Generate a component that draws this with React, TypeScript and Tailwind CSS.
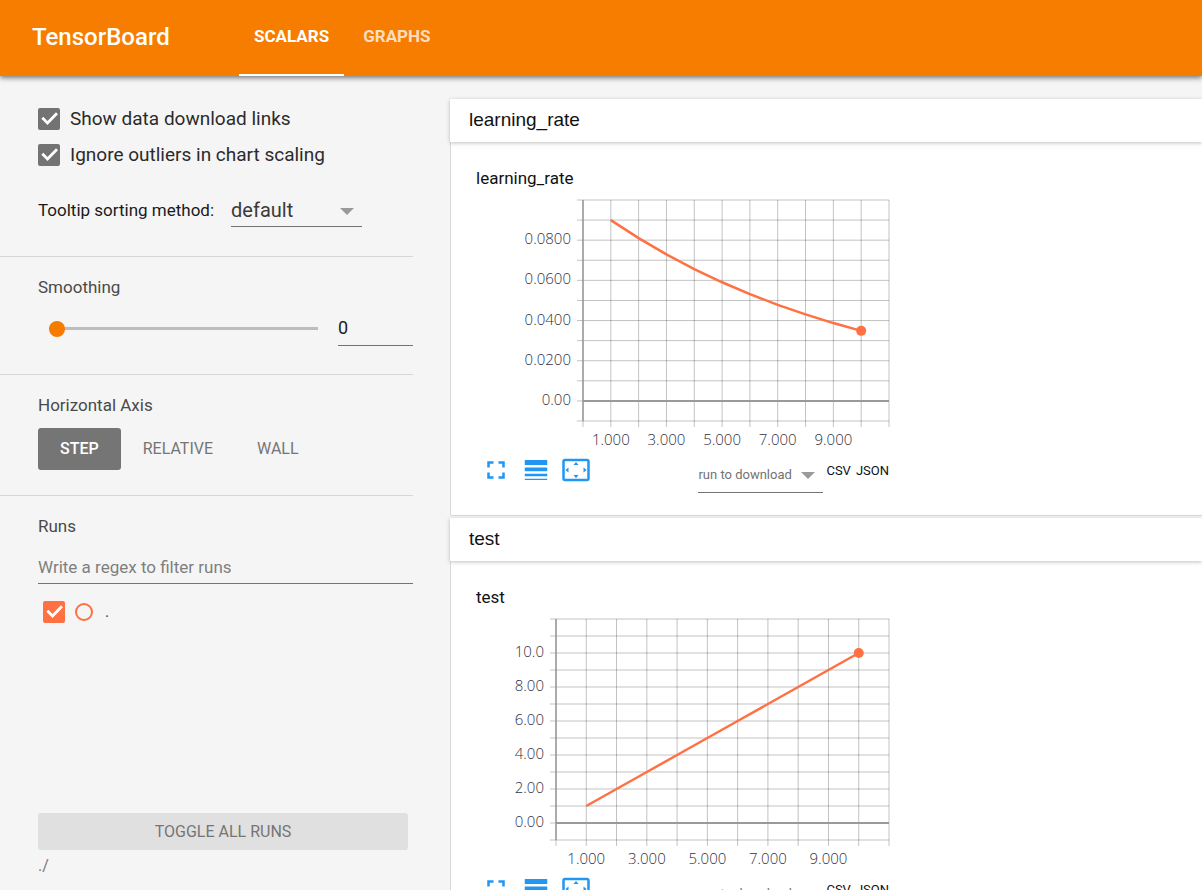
import React, { useState } from 'react';

interface Point {
  step: number;
  value: number;
}

interface ScalarChart {
  tag: string;
  points: Point[];
  plotLeft: number;
  yMin: number;
  yMax: number;
  yStep: number;
  yLabels: { value: number; text: string }[];
}

const STEPS = [1, 2, 3, 4, 5, 6, 7, 8, 9, 10];

const CHARTS: ScalarChart[] = [
  {
    tag: 'learning_rate',
    points: STEPS.map((step) => ({ step, value: 0.09 * Math.pow(0.9, step - 1) })),
    plotLeft: 107,
    yMin: -0.01,
    yMax: 0.1,
    yStep: 0.01,
    yLabels: [
      { value: 0.08, text: '0.0800' },
      { value: 0.06, text: '0.0600' },
      { value: 0.04, text: '0.0400' },
      { value: 0.02, text: '0.0200' },
      { value: 0, text: '0.00' },
    ],
  },
  {
    tag: 'test',
    points: STEPS.map((step) => ({ step, value: step })),
    plotLeft: 80,
    yMin: -1,
    yMax: 12,
    yStep: 1,
    yLabels: [
      { value: 10, text: '10.0' },
      { value: 8, text: '8.00' },
      { value: 6, text: '6.00' },
      { value: 4, text: '4.00' },
      { value: 2, text: '2.00' },
      { value: 0, text: '0.00' },
    ],
  },
];

const FULLSCREEN = 'M7 14H5v5h5v-2H7v-3zm-2-4h2V7h3V5H5v5zm12 7h-3v2h5v-5h-2v3zM14 5v2h3v3h2V5h-5z';
const LINE_WEIGHT = 'M3 17h18v-2H3v2zm0 3h18v-1H3v1zm0-7h18v-3H3v3zm0-9v4h18V4H3z';
const OVERSCAN =
  'M12.01 5.5L10 8h4l-1.99-2.5zM18 10v4l2.5-1.99L18 10zM6 10l-2.5 2.01L6 14v-4zm8 6h-4l2.01 2.5L14 16zm7-13H3c-1.1 0-2 .9-2 2v14c0 1.1.9 2 2 2h18c1.1 0 2-.9 2-2V5c0-1.1-.9-2-2-2zm0 16.01H3V4.99h18v14.02z';

const Checkbox: React.FC<{ id: string; label?: string; color: string }> = ({ id, label, color }) => {
  const [checked, setChecked] = useState(true);
  return (
    <span className="relative block h-[22px] w-[22px] shrink-0">
      <input
        id={id}
        type="checkbox"
        aria-label={label}
        checked={checked}
        onChange={() => setChecked(!checked)}
        className={`block h-full w-full appearance-none rounded-xs ${color}`}
      />
      {checked && (
        <svg viewBox="0 0 22 22" className="pointer-events-none absolute inset-0" fill="none" stroke="#fff" strokeWidth="2.8">
          <path d="M4.3 9.8l5.2 5.2L19 5.3" />
        </svg>
      )}
    </span>
  );
};

const Caret: React.FC<{ className: string }> = ({ className }) => (
  <svg viewBox="0 0 14 7" className={`pointer-events-none absolute h-[7px] w-[14px] fill-[#9a9a9a] ${className}`}>
    <path d="M0 0h14L7 7z" />
  </svg>
);

const LineChart: React.FC<{ chart: ScalarChart }> = ({ chart }) => {
  const right = 413;
  const top = 5;
  const bottom = 226;
  const x = (step: number) => chart.plotLeft + ((right - chart.plotLeft) * step) / 11;
  const y = (value: number) => bottom - ((bottom - top) * (value - chart.yMin)) / (chart.yMax - chart.yMin);
  const rowCount = Math.round((chart.yMax - chart.yMin) / chart.yStep);
  const rows = Array.from({ length: rowCount + 1 }, (_, i) => chart.yMin + i * chart.yStep);
  const cols = Array.from({ length: 12 }, (_, i) => i);
  const last = chart.points[chart.points.length - 1];

  return (
    <svg width="413" height="255" className="block overflow-visible" role="img" aria-label={chart.tag}>
      <g stroke="#000" strokeOpacity="0.24">
        {rows.map((v) => (
          <line key={v} x1={chart.plotLeft - 6} x2={right} y1={y(v)} y2={y(v)} />
        ))}
        {cols.map((s) => (
          <line key={s} x1={x(s)} x2={x(s)} y1={top} y2={bottom + 6} />
        ))}
      </g>
      <line x1={chart.plotLeft} x2={right} y1={y(0)} y2={y(0)} stroke="#999" strokeWidth="2" />
      <line x1={chart.plotLeft} x2={chart.plotLeft} y1={top} y2={bottom} stroke="#999" strokeWidth="1.5" />
      <polyline
        points={chart.points.map((p) => `${x(p.step)},${y(p.value)}`).join(' ')}
        fill="none"
        stroke="#ff7043"
        strokeWidth="2.5"
      />
      <circle cx={x(last.step)} cy={y(last.value)} r="5" fill="#ff7043" />
      <g className="fill-[#32313f] font-['Open_Sans',sans-serif] text-[15px] font-light">
        {chart.yLabels.map((l) => (
          <text key={l.text} x={chart.plotLeft - 12} y={y(l.value) + 4} textAnchor="end">
            {l.text}
          </text>
        ))}
        {[1, 3, 5, 7, 9].map((s) => (
          <text key={s} x={x(s)} y={bottom + 24} textAnchor="middle">
            {`${s}.000`}
          </text>
        ))}
      </g>
    </svg>
  );
};

const IconButton: React.FC<{ label: string; path: string; onClick?: () => void }> = ({ label, path, onClick }) => (
  <button aria-label={label} onClick={onClick} className="flex h-10 w-10 items-center justify-center">
    <svg viewBox="0 0 24 24" className="h-[30px] w-[30px] fill-[#2196f3]">
      <path d={path} />
    </svg>
  </button>
);

const ChartPane: React.FC<{ chart: ScalarChart }> = ({ chart }) => (
  <section className="mb-0.5">
    <h2 className="relative flex h-[43px] items-center bg-white pl-[19px] font-['Liberation_Sans',Arial,sans-serif] text-[19px] shadow-[0_1px_4px_rgba(0,0,0,0.25)]">
      {chart.tag}
    </h2>
    <div className="h-[374px] rounded-bl-xs border-b border-l border-[#d9d9d9] bg-white pt-6 pl-[25px]">
      <div className="w-[413px]">
        <h3 className="mb-[5px] text-[17px] leading-6">{chart.tag}</h3>
        <LineChart chart={chart} />
        <div className="flex items-start">
          <IconButton label="Toggle fullscreen" path={FULLSCREEN} />
          <IconButton label="Toggle y-axis log scale" path={LINE_WEIGHT} />
          <IconButton label="Fit domain to data" path={OVERSCAN} />
          <div className="relative mt-2 ml-auto">
            <select
              aria-label="run to download"
              className="block h-[35px] w-[125px] appearance-none border-b border-[#737373] text-[13px] text-[#737373]"
            >
              <option>run to download</option>
            </select>
            <Caret className="top-[14px] right-2" />
          </div>
          <div className="mt-[11px] flex gap-[5px] pl-[3px] text-[13px] leading-5">
            <a href="#csv">CSV</a>
            <a href="#json">JSON</a>
          </div>
        </div>
      </div>
    </div>
  </section>
);

const Sidebar: React.FC = () => {
  const [axis, setAxis] = useState('STEP');
  const [smoothing, setSmoothing] = useState(0);

  return (
    <aside className="flex w-[413px] shrink-0 flex-col text-[17px] text-[#4a4a4a]">
      <div className="border-b border-[#d6d6d6] pt-8 pb-[29px] pl-[38px] text-[#2b2b2b]">
        <div className="flex h-[22px] items-center gap-2.5">
          <Checkbox id="download-links" color="bg-[#737373]" />
          <label htmlFor="download-links" className="text-[19px]">Show data download links</label>
        </div>
        <div className="mt-3.5 flex h-[22px] items-center gap-2.5">
          <Checkbox id="ignore-outliers" color="bg-[#737373]" />
          <label htmlFor="ignore-outliers" className="text-[19px]">Ignore outliers in chart scaling</label>
        </div>
        <div className="mt-7 flex items-center gap-[17px]">
          <label htmlFor="tooltip-sort" className="text-[#1a1a1a]">Tooltip sorting method:</label>
          <div className="relative">
            <select id="tooltip-sort" className="block h-[33px] w-[131px] appearance-none border-b border-[#737373] text-[20px] text-[#3a3a3a]">
              <option>default</option>
              <option>ascending</option>
              <option>descending</option>
              <option>nearest</option>
            </select>
            <Caret className="top-[14px] right-2" />
          </div>
        </div>
      </div>

      <div className="border-b border-[#d6d6d6] pt-[18px] pb-7 pl-[38px]">
        <label htmlFor="smoothing" className="block leading-6">Smoothing</label>
        <div className="mt-3 flex items-center">
          <input
            id="smoothing"
            type="range"
            min="0"
            max="1"
            step="0.001"
            value={smoothing}
            onChange={(e) => setSmoothing(Number(e.target.value))}
            className="mr-5 ml-[11px] h-4 min-w-0 flex-1 appearance-none bg-transparent [&::-webkit-slider-runnable-track]:h-[3px] [&::-webkit-slider-runnable-track]:bg-[#bdbdbd] [&::-webkit-slider-thumb]:-mt-[6px] [&::-webkit-slider-thumb]:h-4 [&::-webkit-slider-thumb]:w-4 [&::-webkit-slider-thumb]:appearance-none [&::-webkit-slider-thumb]:rounded-full [&::-webkit-slider-thumb]:bg-[#f57c00]"
          />
          <input
            aria-label="Smoothing value"
            type="text"
            value={smoothing}
            onChange={(e) => setSmoothing(Number(e.target.value) || 0)}
            className="h-[35px] w-[75px] border-b border-[#737373] pb-0.5 text-[18px] text-[#212121]"
          />
        </div>
      </div>

      <div className="border-b border-[#d6d6d6] pt-[18px] pb-[25px] pl-[38px]">
        <h3 className="leading-6">Horizontal Axis</h3>
        <div className="mt-[11px] flex text-[16px]">
          {['STEP', 'RELATIVE', 'WALL'].map((name) => (
            <button
              key={name}
              onClick={() => setAxis(name)}
              className={`h-[42px] rounded-[3px] px-[22px] ${axis === name ? 'bg-[#757575] font-medium text-white' : 'text-[#757575]'}`}
            >
              {name}
            </button>
          ))}
        </div>
      </div>

      <div className="flex min-h-0 flex-1 flex-col pt-[18px] pl-[38px]">
        <label htmlFor="runs-regex" className="leading-6">Runs</label>
        <input
          id="runs-regex"
          type="text"
          placeholder="Write a regex to filter runs"
          className="mt-3 h-[34px] shrink-0 border-b border-[#737373] text-[17px] placeholder:text-[#7f7f7f]"
        />
        <div className="flex min-h-0 flex-1 items-start overflow-hidden pt-[17px] pl-[5px]">
          <Checkbox id="run-all" label="Show run" color="bg-[#ff7043]" />
          <button aria-label="Show only this run" className="mt-0.5 ml-2.5 h-[18px] w-[18px] rounded-full border-2 border-[#ff7043]" />
          <label htmlFor="run-all" className="ml-3 text-[16px] leading-[22px]">.</label>
        </div>
        <button className="mr-[5px] h-[37px] shrink-0 rounded-[3px] bg-[#e0e0e0] text-[16px] text-[#757575]">TOGGLE ALL RUNS</button>
        <div className="h-10 text-[16px] leading-8 text-[#757575]">./</div>
      </div>
    </aside>
  );
};

const App: React.FC = () => {
  const [tab, setTab] = useState('SCALARS');

  return (
    <div className="flex h-screen flex-col overflow-hidden bg-[#f5f5f5] font-[Roboto,sans-serif] text-[#111]">
      <header className="relative z-10 flex h-[76px] shrink-0 items-center bg-[#f77d00] pl-8 text-white shadow-[0_2px_5px_rgba(0,0,0,0.5)]">
        <h1 className="w-[207px] pb-0.5 text-[24px] font-medium">TensorBoard</h1>
        <nav className="flex h-full gap-1">
          {['SCALARS', 'GRAPHS'].map((name) => (
            <button
              key={name}
              onClick={() => setTab(name)}
              className={`border-b-2 px-[15px] text-[17px] font-bold ${tab === name ? 'border-white' : 'border-transparent text-white/75'}`}
            >
              {name}
            </button>
          ))}
        </nav>
      </header>
      <div className="flex min-h-0 flex-1">
        <Sidebar />
        <main className="min-w-0 flex-1 overflow-hidden pt-[23px] pl-[37px]">
          {CHARTS.map((chart) => (
            <ChartPane key={chart.tag} chart={chart} />
          ))}
        </main>
      </div>
    </div>
  );
};

export default App;
